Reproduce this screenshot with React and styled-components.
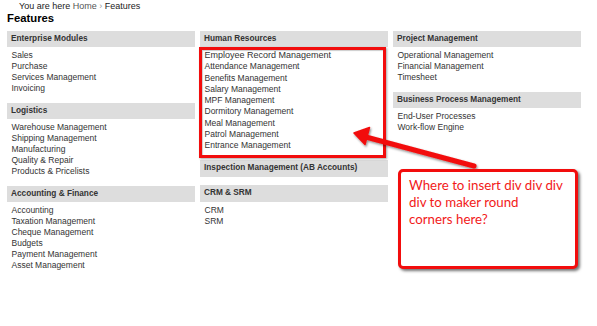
import React from 'react'
import styled, { createGlobalStyle } from 'styled-components'

const GlobalStyle = createGlobalStyle`
  body {
    margin: 0;
    background: #fff;
    font-family: "Liberation Sans", Arial, sans-serif;
  }
`

const Page = styled.div`
  position: relative;
  width: 597px;
  height: 326px;
  padding: 0 7px;
  box-sizing: border-box;
  overflow: hidden;
`

const Breadcrumb = styled.div`
  padding-left: 12px;
  font-size: 9px;
  line-height: 12px;
  color: #222;

  a {
    color: #555;
    text-decoration: none;
  }

  span {
    color: #999;
  }
`

const Title = styled.h1`
  margin: 0 0 5.5px;
  font-size: 11.3px;
  line-height: 13px;
  font-weight: bold;
  color: #000;
`

const Columns = styled.div`
  display: grid;
  grid-template-columns: repeat(3, 188px);
  column-gap: 5px;
  align-items: start;
`

const Column = styled.div`
  display: flex;
  flex-direction: column;
`

const Section = styled.div`
  margin-bottom: 8.5px;
`

const SectionHeader = styled.div`
  height: 16.5px;
  line-height: 16.5px;
  padding-left: 4px;
  background: #dddddd;
  font-size: 8.25px;
  font-weight: bold;
  color: #333;
`

const ItemList = styled.ul`
  position: relative;
  list-style: none;
  margin: 0;
  padding: 3px 0 0 4.5px;
  line-height: ${props => (props.$loose ? '11.3px' : '11px')};

  &:empty {
    padding: 0;
  }

  ${props => props.$highlighted && `
    &::after {
      content: '';
      position: absolute;
      top: 0;
      left: -1px;
      right: 2px;
      bottom: -6px;
      border: 3px solid #f20d0d;
      box-shadow: 1px 1px 2px rgba(0, 0, 0, 0.35), inset 1px 1px 1px rgba(0, 0, 0, 0.2);
      pointer-events: none;
    }
  `}
`

const Item = styled.li`
  font-size: ${props => (props.$large ? '9px' : '8.5px')};
  color: #333;
  white-space: nowrap;
`

const Callout = styled.div`
  position: absolute;
  left: 398px;
  top: 169px;
  width: 180px;
  height: 100px;
  box-sizing: border-box;
  padding: 5px 6px 5px 8px;
  border: 3px solid #f20d0d;
  border-radius: 5px;
  background: #fff;
  box-shadow: 2px 2px 3px rgba(0, 0, 0, 0.55);
  font-family: Lato, "Open Sans", sans-serif;
  font-size: 13.3px;
  line-height: 17px;
  color: #f21a1a;
  white-space: nowrap;
`

const ArrowLayer = styled.svg`
  position: absolute;
  left: 0;
  top: 0;
  pointer-events: none;
`

const s = (title, items = [], opts = {}) => ({ title, items, ...opts })

const columns = [
  [
    s('Enterprise Modules', ['Sales', 'Purchase', 'Services Management', 'Invoicing']),
    s('Logistics', ['Warehouse Management', 'Shipping Management', 'Manufacturing', 'Quality & Repair', 'Products & Pricelists']),
    s('Accounting & Finance', ['Accounting', 'Taxation Management', 'Cheque Management', 'Budgets', 'Payment Management', 'Asset Management']),
  ],
  [
    s('Human Resources', [
      'Employee Record Management',
      'Attendance Management',
      'Benefits Management',
      'Salary Management',
      'MPF Management',
      'Dormitory Management',
      'Meal Management',
      'Patrol Management',
      'Entrance Management',
    ], { highlighted: true }),
    s('Inspection Management (AB Accounts)'),
    s('CRM & SRM', ['CRM', 'SRM']),
  ],
  [
    s('Project Management', ['Operational Management', 'Financial Management', 'Timesheet']),
    s('Business Process Management', ['End-User Processes', 'Work-flow Engine']),
  ],
]

const Arrow = () => (
  <ArrowLayer width="597" height="326" viewBox="0 0 597 326">
    <defs>
      <filter id="shade" x="-10%" y="-10%" width="130%" height="140%">
        <feDropShadow dx="1" dy="1.5" stdDeviation="1" floodColor="#000" floodOpacity="0.45" />
      </filter>
    </defs>
    <g filter="url(#shade)" fill="#f20d0d" stroke="#f20d0d">
      <line x1="474" y1="166" x2="364" y2="136.5" strokeWidth="5" strokeLinecap="round" />
      <polygon points="354,133 369.5,127.5 365,144.5" strokeWidth="1.5" strokeLinejoin="round" />
    </g>
  </ArrowLayer>
)

export default function App() {
  return (
    <Page>
      <GlobalStyle />
      <Breadcrumb>
        You are here <a href="#">Home</a> <span>›</span> Features
      </Breadcrumb>
      <Title>Features</Title>
      <Columns>
        {columns.map((sections, ci) => (
          <Column key={ci}>
            {sections.map(({ title, items, highlighted }) => (
              <Section key={title}>
                <SectionHeader>{title}</SectionHeader>
                <ItemList $highlighted={highlighted} $loose={highlighted}>
                  {items.map((item, i) => (
                    <Item key={item} $large={highlighted && i === 0}>{item}</Item>
                  ))}
                </ItemList>
              </Section>
            ))}
          </Column>
        ))}
      </Columns>
      <Arrow />
      <Callout>
        Where to insert div div div<br />
        div to maker round<br />
        corners here?
      </Callout>
    </Page>
  )
}
